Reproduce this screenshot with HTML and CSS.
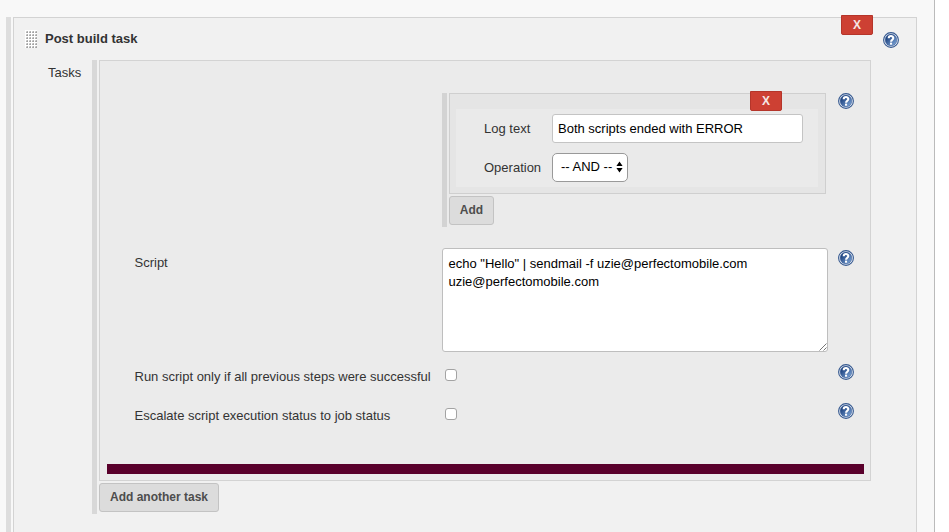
FILE: index.html
```html
<!DOCTYPE html>
<html lang="en">
<head>
<meta charset="utf-8">
<title>Post build task</title>
<link rel="stylesheet" href="styles.css">
</head>
<body>
<svg width="0" height="0" class="defs" aria-hidden="true">
  <defs>
    <linearGradient id="blue" x1="0" y1="0" x2="1" y2="1"><stop offset="0.25" stop-color="#234884"/><stop offset="0.8" stop-color="#6d94c8"/></linearGradient>
    <symbol id="help" viewBox="0 0 16 16">
      <circle cx="8" cy="8" r="7.4" fill="#f4f7fb" stroke="#35588f" stroke-width="1.1"/>
      <circle cx="8" cy="8" r="5.9" fill="url(#blue)" stroke="#3c5f96" stroke-width="0.5"/>
      <path d="M5.7 6.2C5.7 3.4 10.3 3.4 10.3 6C10.3 7.7 8.1 7.7 8.1 9.7" fill="none" stroke="#fff" stroke-width="2.1"/>
      <rect x="7" y="10.6" width="2.1" height="2.1" fill="#fff"/>
    </symbol>
  </defs>
</svg>
<main class="page">
  <section class="repeat">
    <div class="panel outer">
      <button class="delete">X</button>
      <header class="heading">
        <span class="handle"></span>
        <h1>Post build task</h1>
        <svg class="help"><use href="#help"/></svg>
      </header>
      <div class="tasks">
        <span class="tasks-label">Tasks</span>
        <div class="repeat task-list">
          <div class="panel task">
            <div class="row row-log">
              <span></span>
              <div class="repeat logs">
                <div class="panel log">
                  <button class="delete">X</button>
                  <div class="fields">
                    <label for="log">Log text</label>
                    <input id="log" class="text" type="text" value="Both scripts ended with ERROR">
                    <span class="label">Operation</span>
                    <div class="select">-- AND --<svg width="7" height="12" viewBox="0 0 7 12"><path d="M0.4 4.9L3.5 0.4L6.6 4.9ZM0.4 7.1L3.5 11.6L6.6 7.1Z"/></svg></div>
                  </div>
                </div>
                <button class="btn add">Add</button>
              </div>
              <svg class="help"><use href="#help"/></svg>
            </div>
            <div class="row row-script">
              <label for="script">Script</label>
              <div class="area">
                <textarea id="script" spellcheck="false">echo "Hello" | sendmail -f uzie@perfectomobile.com
uzie@perfectomobile.com</textarea>
                <svg class="grip" width="8" height="8" viewBox="0 0 8 8"><path d="M0.5 7.5L7.5 0.5M4.5 7.5L7.5 4.5" fill="none" stroke="#555" stroke-width="0.8"/></svg>
              </div>
              <svg class="help"><use href="#help"/></svg>
            </div>
            <div class="row row-check">
              <label for="only">Run script only if all previous steps were successful</label>
              <input id="only" class="check" type="checkbox">
              <svg class="help"><use href="#help"/></svg>
            </div>
            <div class="row row-check escalate">
              <label for="esc">Escalate script execution status to job status</label>
              <input id="esc" class="check" type="checkbox">
              <svg class="help"><use href="#help"/></svg>
            </div>
            <div class="divider"></div>
          </div>
          <button class="btn another">Add another task</button>
        </div>
      </div>
    </div>
  </section>
</main>
</body>
</html>
```
FILE: styles.css
```css
* { box-sizing: border-box; }
body {
  margin: 0;
  height: 532px;
  overflow: hidden;
  background: #fff;
  color: #333;
  font: 13px/16px "Liberation Sans", Helvetica, Arial, sans-serif;
}
button, input, textarea { font: inherit; margin: 0; }
.defs { position: absolute; }
.page {
  width: 935px;
  height: 532px;
  padding: 17px 17px 0 6px;
  background: #f8f8f8;
  border-right: 1px solid #bbb;
  overflow: hidden;
}
.repeat { border-left: 5px solid #ddd; padding-left: 2px; }
.panel { position: relative; border: 1px solid #d3d3d3; }
.outer { height: 530px; background: #f1f1f1; }
.help { display: block; width: 16px; height: 16px; }
.delete {
  position: absolute;
  top: -3px;
  right: 43px;
  width: 32px;
  height: 20px;
  padding: 0;
  border: 1px solid #b5352a;
  border-radius: 0 0 2px 2px;
  background: #cd4033;
  color: #f5e6e4;
  font-size: 12px;
  font-weight: bold;
  line-height: 18px;
}
.heading { display: flex; height: 42px; padding: 13px 17px 0 11px; }
.heading h1 { margin: 0 0 0 8px; font-size: 13px; font-weight: bold; line-height: 16px; }
.heading .help { margin: 1px 0 0 auto; }
.handle {
  width: 12px;
  height: 18px;
  margin-top: -1px;
  background:
    linear-gradient(#fff 1px, transparent 1px) 0 0 / 3px 3px,
    linear-gradient(90deg, #fff 1px, transparent 1px) 0 0 / 3px 3px,
    linear-gradient(135deg, #ddd 45%, #a0a0a0 75%) 0 0 / 3px 3px;
}
.tasks { display: flex; }
.tasks-label { width: 78px; padding: 5px 0 0 34px; }
.task-list { height: 454px; border-color: #d8d8d8; }
.task { width: 772px; height: 421px; padding-top: 32px; background: #ebebeb; }
.row { display: grid; grid-template-columns: 342px 386px 16px; }
.row .help { margin-left: 10px; }
.row > label { padding-left: 34.5px; white-space: nowrap; }
.row-log { height: 134px; }
.logs { border-color: #d3d3d3; }
.log { width: 377px; height: 101px; padding: 15px 7px 6px 6px; background: #e5e5e5; border-color: #cfcfcf; }
.fields {
  display: grid;
  grid-template-columns: 68px auto;
  grid-template-rows: 29px 29px;
  row-gap: 10px;
  justify-content: start;
  align-items: center;
  height: 78px;
  padding: 5px 0 5px 28px;
  background: #eaeaea;
}
.text {
  width: 251px;
  height: 29px;
  padding: 0 5px;
  border: 1px solid #c4c4c4;
  border-radius: 3px;
  background: #fff;
  color: #000;
}
.select {
  display: flex;
  align-items: center;
  justify-content: space-between;
  width: 76px;
  height: 29px;
  padding: 0 4px 1px 8px;
  border: 1px solid #999;
  border-radius: 5px;
  background: #fff;
  color: #000;
}
.btn {
  display: block;
  height: 29px;
  margin-top: 2px;
  padding: 0 0 2px;
  border: 1px solid #c3c3c3;
  border-radius: 3px;
  background: #dcdcdc;
  color: #4d4d4d;
  font-size: 12px;
  font-weight: bold;
}
.add { width: 45px; }
.another { width: 120px; }
.row-script { height: 104px; margin-top: 21px; }
.row-script label { padding-top: 7px; }
.row-script .help { margin-top: 2px; }
.area { position: relative; height: 104px; }
textarea {
  display: block;
  width: 386px;
  height: 104px;
  padding: 6px 5px 6px 5.5px;
  border: 1px solid #bebebe;
  border-radius: 3px;
  background: #fff;
  color: #000;
  line-height: 18px;
  resize: none;
  overflow: hidden;
}
.grip { position: absolute; right: 1px; bottom: 1px; }
.row-check { height: 16px; margin-top: 12px; }
.row-check label { padding-top: 5px; }
.escalate { margin-top: 23px; }
.check {
  appearance: none;
  width: 12px;
  height: 12px;
  margin: 5px 0 0 3px;
  border: 1px solid #a3a3a3;
  border-radius: 3px;
  background: #fff;
}
.divider { height: 10px; margin: 45px 6px 0 7px; background: #59002b; }
```
